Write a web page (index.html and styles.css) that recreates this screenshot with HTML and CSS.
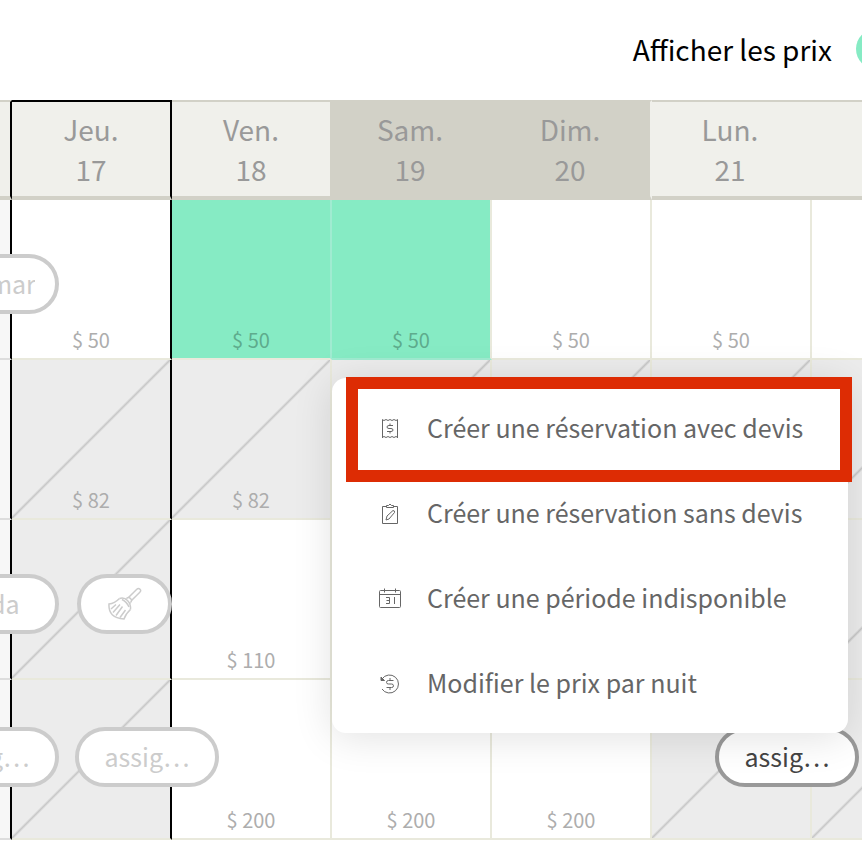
FILE: index.html
```html
<!DOCTYPE html>
<html lang="fr">
<head>
    <meta charset="UTF-8">
    <meta name="viewport" content="width=device-width, initial-scale=1.0">
    <title>Calendrier</title>
    <link rel="stylesheet" href="styles.css">
</head>
<body>

    <!-- Barre d'outils -->
    <header class="toolbar">
        <label for="show-prices">Afficher les prix</label>
        <input type="checkbox" id="show-prices" class="toggle" checked>
    </header>

    <main class="calendar">
        <table class="calendar-table">
            <thead>
                <tr>
                    <th class="today-edge"></th>
                    <th class="today today-edge">Jeu.<br>17</th>
                    <th class="before-weekend">Ven.<br>18</th>
                    <th class="weekend">Sam.<br>19</th>
                    <th class="weekend weekend-end">Dim.<br>20</th>
                    <th class="weekday">Lun.<br>21</th>
                    <th class="weekday"></th>
                </tr>
            </thead>
            <tbody>
                <tr>
                    <td class="past today-edge"><div class="pill"><span class="pill-name">Feldmark</span></div></td>
                    <td class="today-edge">$ 50</td>
                    <td class="selected selected-start">$ 50</td>
                    <td class="selected selected-end">$ 50</td>
                    <td>$ 50</td>
                    <td>$ 50</td>
                    <td></td>
                </tr>
                <tr>
                    <td class="past today-edge"></td>
                    <td class="busy today-edge">$ 82</td>
                    <td class="busy">$ 82</td>
                    <td class="busy"></td>
                    <td class="busy"></td>
                    <td class="busy"></td>
                    <td class="busy"></td>
                </tr>
                <tr>
                    <td class="past today-edge"><div class="pill"><span class="pill-name">Linda</span></div></td>
                    <td class="busy today-edge">
                        <div class="pill pill-cleaning">
                            <svg width="34" height="34" viewBox="0 0 34 34" role="img" aria-label="Ménage">
                                <path d="M20.500 10.500 28.800 2.200Q30.500 .6 32 2.200T31.800 5.200L23.500 13.500"/>
                                <path d="M18.500 11.500Q20.500 9.500 22.500 11.500T22.500 15.500"/>
                                <path d="M11.500 11.500Q16 10 19.500 13.500T22.500 22.500"/>
                                <path d="M11.500 11.500Q6.500 16.500 1 17Q0 31 16 32Q17.500 27 22.500 22.500"/>
                                <path d="M14 12.500Q19 15 21 20M8 17.500 3 22M12 17.500 5 25.500M14.500 19.500 8 28.500M17.500 23 12 30.500M18.500 11.500 18 12.500M22.500 15.500 21.500 16.500"/>
                            </svg>
                        </div>
                    </td>
                    <td>$ 110</td>
                    <td></td>
                    <td></td>
                    <td class="busy"></td>
                    <td class="busy"></td>
                </tr>
                <tr>
                    <td class="past today-edge"><div class="pill pill-low"><span class="pill-name">assig…</span></div></td>
                    <td class="busy today-edge"><div class="pill pill-low"><span class="pill-name">assig…</span></div></td>
                    <td>$ 200</td>
                    <td>$ 200</td>
                    <td>$ 200</td>
                    <td class="busy"><div class="pill pill-low pill-active"><span class="pill-name">assig…</span></div></td>
                    <td class="busy"></td>
                </tr>
            </tbody>
        </table>

        <!-- Menu contextuel -->
        <div class="menu">
            <button class="menu-item highlighted">
                <svg width="24" height="24" viewBox="0 0 24 24" aria-hidden="true">
                    <path d="M4.500 3v18M19.500 3v18M4 2.500l2 1 2-1 2 1 2-1 2 1 2-1 2 1 2-1M4 20.500l2-1 2 1 2-1 2 1 2-1 2 1 2-1 2 1"/>
                    <path d="M15 8.500h-4q-2 0-2 1.500t2 1.500h2q2 0 2 1.500t-2 1.500H9M12 6.500v2M12 14.500v2"/>
                </svg>
                <span class="menu-label">Créer une réservation avec devis</span>
            </button>
            <button class="menu-item">
                <svg width="24" height="24" viewBox="0 0 24 24" aria-hidden="true">
                    <path d="M8.500 4.500h-4v17h15v-17h-4M8.500 5.500v-2h2q1.500-3 3 0h2v2z"/>
                    <path d="M8 18l1-4 6-5.500q2 0 1.500 2L11 17z"/>
                </svg>
                <span class="menu-label">Créer une réservation sans devis</span>
            </button>
            <button class="menu-item">
                <svg width="24" height="24" viewBox="0 0 24 24" aria-hidden="true">
                    <path d="M2.500 3.500h19q1 0 1 1v15q0 1-1 1h-19q-1 0-1-1v-15q0-1 1-1zM2 7.500h20M6.500 1.500v4M17.500 1.500v4"/>
                    <path d="M8 10.500h3.500v6H8M8.500 13.500h3M16.500 10v7"/>
                </svg>
                <span class="menu-label">Créer une période indisponible</span>
            </button>
            <button class="menu-item">
                <svg width="24" height="24" viewBox="0 0 24 24" aria-hidden="true">
                    <path d="M4 7a9 9 0 1 1 0 10"/>
                    <path d="M3 5v3.500h3.500z" fill="currentColor"/>
                    <path d="M15.500 8.500h-5q-2 0-2 1.800t2 1.700h3q2 0 2 1.800t-2 1.700h-5M12 6v2.500M12 15.500v2.500"/>
                </svg>
                <span class="menu-label">Modifier le prix par nuit</span>
            </button>
        </div>
    </main>

</body>
</html>
```
FILE: styles.css
```css
body {
    margin: 0;
    font-family: "Noto Sans CJK SC", "Noto Sans", sans-serif;
    background-color: white;
    overflow: hidden;
}

.toolbar {
    box-sizing: border-box;
    display: flex;
    justify-content: flex-end;
    align-items: center;
    gap: 24px;
    height: 100px;
    padding-bottom: 2px;
    margin-right: -64px;
    font-size: 28px;
    line-height: 40px;
    color: #000;
}

.toggle {
    appearance: none;
    flex-shrink: 0;
    width: 70px;
    height: 40px;
    margin: 0;
    border-radius: 20px;
    background-color: #86ebc4;
}

.calendar {
    position: relative;
    overflow: hidden;
}

.calendar-table {
    table-layout: fixed;
    width: 1120px;
    margin-left: -148px;
    border-collapse: separate;
    border-spacing: 0;
}

th {
    box-sizing: border-box;
    height: 100px;
    padding: 7px 0;
    border-top: 2px solid #d2d1c7;
    border-right: 2px solid #f0f0eb;
    border-bottom: 4px solid #d2d1c7;
    background-color: #f0f0eb;
    color: #999;
    font-size: 28px;
    font-weight: 400;
    line-height: 40px;
}

.before-weekend {
    border-right-color: #d2d1c7;
}

.weekday {
    padding-right: 4px;
    border-right: none;
}

.weekend {
    padding-right: 2px;
    background-color: #d2d1c7;
    border-right-color: #d2d1c7;
}

.weekend-end {
    border-right-color: #f0f0eb;
}

.today {
    border-top-color: #000;
}

td {
    position: relative;
    box-sizing: border-box;
    height: 160px;
    padding: 0 0 3px;
    border-right: 2px solid #e9e9dc;
    border-bottom: 2px solid #e9e9dc;
    color: #adadad;
    font-size: 20px;
    line-height: 30px;
    text-align: center;
    vertical-align: bottom;
}

.busy {
    background: linear-gradient(to bottom right, transparent calc(50% - 2px), #c8c8c8 50%, transparent calc(50% + 2px)) #ececec;
    background-clip: padding-box;
}

.past {
    background-color: #f7f7f7;
    border-bottom-color: #ddd;
}

.selected {
    background-color: #86ebc4;
    background-clip: padding-box;
    color: #5eab8d;
}

.selected-start {
    border-right-color: #a0ebd1;
}

.selected-end {
    border-bottom-color: #a0ebd1;
}

.today-edge {
    border-right-color: #000;
}

/* Réservations posées sur la grille */
.pill {
    position: absolute;
    z-index: 1;
    top: 54px;
    left: 63px;
    box-sizing: border-box;
    display: flex;
    justify-content: center;
    align-items: center;
    width: 144px;
    height: 60px;
    padding: 0 20px;
    border: 4px solid #ccc;
    border-radius: 30px;
    background-color: white;
    color: #ccc;
    font-size: 25px;
    line-height: 36px;
}

.pill-name {
    padding-bottom: 2px;
    overflow: hidden;
    white-space: nowrap;
}

.pill-low {
    top: 47px;
}

.pill-cleaning {
    width: 95px;
    left: 65px;
}

.pill-active {
    border-color: #999;
    color: #444;
}

svg {
    flex-shrink: 0;
    fill: none;
    stroke: currentColor;
    stroke-width: 1;
}

.pill svg {
    stroke-width: 1.500;
}

.menu {
    position: absolute;
    z-index: 2;
    top: 278px;
    left: 332px;
    right: 14px;
    box-sizing: border-box;
    padding: 8px 0 7px;
    border-radius: 14px;
    background-color: white;
    box-shadow: 0 4px 40px rgba(0, 0, 0, 0.12);
}

.menu-item {
    position: relative;
    display: flex;
    align-items: center;
    gap: 25px;
    width: 100%;
    height: 85px;
    padding: 0 0 0 46px;
    border: none;
    background: none;
    color: #666;
    font-family: inherit;
    font-size: 25px;
    line-height: 36px;
    text-align: left;
    white-space: nowrap;
    cursor: pointer;
}

.menu-label {
    padding-bottom: 4px;
}

.highlighted::after {
    content: "";
    position: absolute;
    top: -9px;
    right: -4px;
    bottom: -11px;
    left: 14px;
    border: 12px solid #dd2c04;
}
```
